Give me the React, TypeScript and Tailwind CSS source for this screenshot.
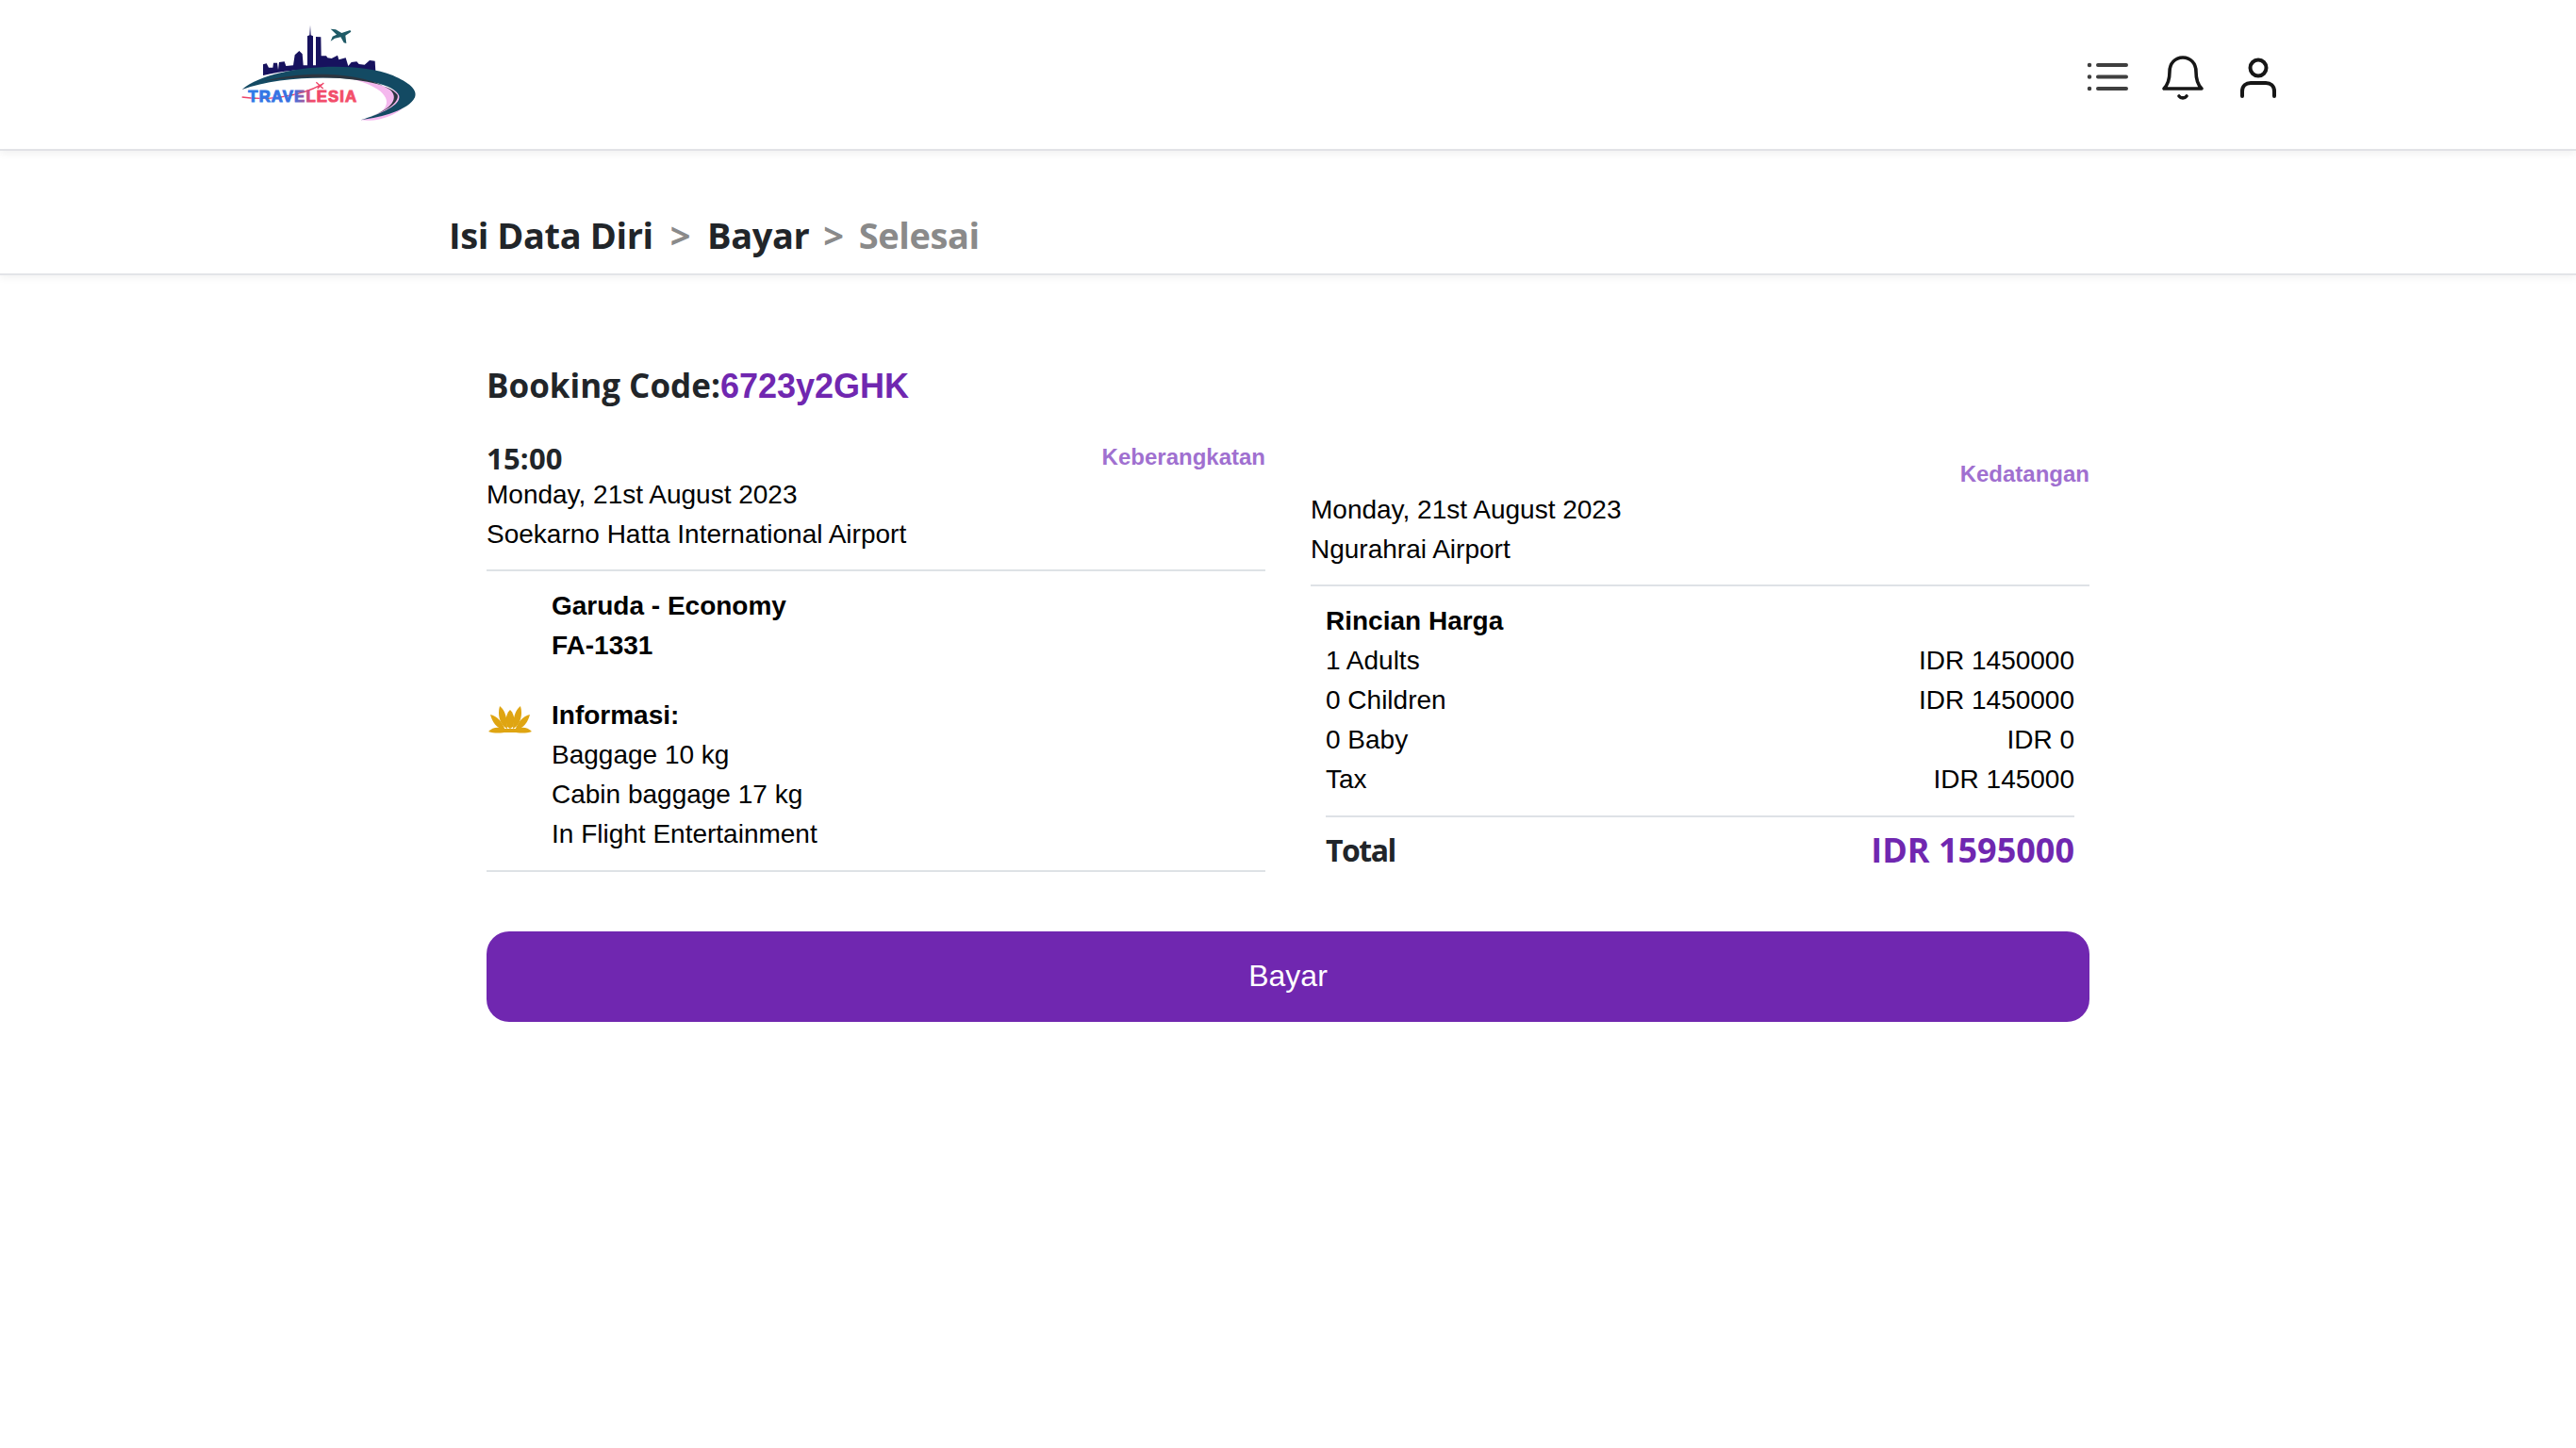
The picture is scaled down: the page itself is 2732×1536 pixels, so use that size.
const heading = "font-['Open_Sans',sans-serif] font-bold text-[#212529]";

function Logo() {
  return (
    <svg width="240" height="150" viewBox="0 0 720 450" className="mb-2 shrink-0">
      <defs>
        <linearGradient id="logoText" x1="0" x2="1" y1="0" y2="0">
          <stop offset="0" stopColor="#2f7be8" />
          <stop offset="0.42" stopColor="#3a6fe0" />
          <stop offset="0.58" stopColor="#f0486a" />
          <stop offset="1" stopColor="#f4506a" />
        </linearGradient>
      </defs>
      {/* pink glow under the swoosh */}
      <path d="M80 285 C170 225 420 215 520 290 C565 330 530 365 458 382 C520 390 590 360 610 320 C540 240 240 210 80 285Z" fill="#f5b8ee" />
      {/* skyline */}
      <path
        d="M147 240 L147 205 L158 202 L165 215 L178 215 L180 200 L192 200 L195 222 L198 198 L215 196 L220 210 L243 208 L248 175 L262 162 L272 172 L275 208 L288 208 L288 115 L295 112 L297 80 L299 112 L306 115 L306 208 L315 208 L315 117 L331 118 L332 178 L348 178 L352 184 L365 186 L384 176 L388 190 L410 184 L418 210 L428 198 L445 196 L452 204 L470 206 L486 192 L503 194 L505 228 C400 215 240 215 147 240Z"
        fill="#17125e"
      />
      {/* swoosh */}
      <path d="M80 285 C170 210 430 190 560 240 C610 262 640 285 630 310 C610 350 530 372 458 382 C525 360 585 335 580 305 C560 240 240 225 80 285Z" fill="#134a63" />
      <path d="M150 258 C270 225 460 225 550 285 C580 310 560 345 490 370 C545 350 580 325 575 302 C535 245 300 235 150 258Z" fill="#2c3540" />
      {/* plane */}
      <path d="M362 92 L378 94 L397 105 L424 96 L427 101 L409 113 L412 138 L404 136 L394 118 L375 122 L362 131 L368 116 L381 110Z" fill="#1f5a66" />
      <path d="M80 309 C150 320 260 310 335 268 M316 262 L338 282 M320 282 L340 264" stroke="#ee4468" strokeWidth="4" fill="none" />
      <text x="100" y="323" fontFamily="'Liberation Sans',sans-serif" fontWeight="700" fontSize="50" letterSpacing="3.5" fill="url(#logoText)" stroke="url(#logoText)" strokeWidth="3">
        TRAVELESIA
      </text>
    </svg>
  );
}

function ListIcon() {
  return (
    <svg width="60" height="60" viewBox="0 0 60 60" fill="none" stroke="#3f3f3f" strokeLinecap="round">
      <path d="M20 17H50M20 29.5H50M20 42H50" strokeWidth="4" />
      <path d="M11 17h.01M11 29.5h.01M11 42h.01" strokeWidth="4.5" />
    </svg>
  );
}

function BellIcon() {
  return (
    <svg width="60" height="60" viewBox="0 0 60 60" fill="none" stroke="#161616" strokeWidth="3.6" strokeLinecap="round" strokeLinejoin="round">
      <path d="M10 42 H50 C45 37 44 31 44 24 C44 15 38 9 30 9 C22 9 16 15 16 24 C16 31 15 37 10 42Z" />
      <path d="M26 50 C28 52.5 32 52.5 34 50" />
    </svg>
  );
}

function UserIcon() {
  return (
    <svg width="60" height="60" viewBox="0 0 60 60" fill="none" stroke="#161616" strokeWidth="4" strokeLinecap="round">
      <circle cx="30" cy="20" r="8.5" />
      <path d="M13 50 V45 C13 39 17 36 22 36 H38 C43 36 47 39 47 45 V50" />
    </svg>
  );
}

function LotusIcon() {
  return (
    <svg width="46" height="29" viewBox="0 0 46 29" fill="#dfa512">
      <path d="M23 4 C28 9 28 15 26 22 L23 24 L20 22 C18 15 18 9 23 4Z" />
      <path d="M12 0 C17 4 20 11 20 24 C13 21 9 10 12 0Z" />
      <path d="M34 0 C29 4 26 11 26 24 C33 21 37 10 34 0Z" />
      <path d="M2 9 C8 10 14 15 18 26 C9 24 4 17 2 9Z" />
      <path d="M44 9 C38 10 32 15 28 26 C37 24 42 17 44 9Z" />
      <path d="M0 27 C5 22 13 21 20 27 C14 29 6 29 0 27Z" />
      <path d="M46 27 C41 22 33 21 26 27 C32 29 40 29 46 27Z" />
      <path d="M17 24 H29 L30 28 H16Z" />
    </svg>
  );
}

const priceRows = [
  ['1 Adults', 'IDR 1450000'],
  ['0 Children', 'IDR 1450000'],
  ['0 Baby', 'IDR 0'],
  ['Tax', 'IDR 145000'],
];

export default function App() {
  return (
    <div className="min-h-[1536px] bg-white font-['Liberation_Sans',sans-serif] text-[28px] leading-[42px] text-black">
      {/* Top bar */}
      <header className="flex h-[160px] items-center justify-between border-b-2 border-[#e3e4e8] pl-[230px] pr-[307px] shadow-[0_3px_8px_rgba(0,0,0,0.06)]">
        <Logo />
        <div className="flex items-center gap-5 pt-[6px]">
          <ListIcon />
          <BellIcon />
          <UserIcon />
        </div>
      </header>

      {/* Steps */}
      <nav className={`flex h-[132px] items-end gap-[18px] border-b-2 border-[#e3e4e8] pb-[14px] pl-[476px] text-[38px] leading-[54px] tracking-[-0.4px] shadow-[0_3px_8px_rgba(0,0,0,0.05)] ${heading}`}>
        <span>Isi Data Diri</span>
        <span className="text-[#8a8a8a]">&gt;</span>
        <span>Bayar</span>
        <span className="-ml-[3px] text-[#8a8a8a]">&gt;</span>
        <span className="-ml-[2px] text-[#8a8a8a]">Selesai</span>
      </nav>

      <main className="mx-[516px] pt-[94px]">
        <h1 className={`text-[35px] leading-[46px] ${heading}`}>
          Booking Code:
          <span className="font-['Liberation_Sans',sans-serif] text-[36px] text-[#7027b0]">6723y2GHK</span>
        </h1>

        <div className="mt-[34px] grid grid-cols-2 gap-x-12">
          {/* Flight */}
          <section>
            <div className="flex items-start justify-between">
              <div className={`text-[31px] leading-[38px] tracking-[0.2px] ${heading}`}>15:00</div>
              <div className="text-[24px] font-bold leading-[36px] text-[#a070d0]">Keberangkatan</div>
            </div>
            <div className="-mt-px">Monday, 21st August 2023</div>
            <div>Soekarno Hatta International Airport</div>
            <div className="mt-[16px] h-[2px] bg-[#dee2e6]" />
            <div className="mt-[16px] flex">
              <div className="w-[69px] shrink-0 pl-[2px] pt-[127px]">
                <LotusIcon />
              </div>
              <div>
                <div className="font-bold">Garuda - Economy</div>
                <div className="font-bold">FA-1331</div>
                <div className="mt-[32px] font-bold">Informasi:</div>
                <div>Baggage 10 kg</div>
                <div>Cabin baggage 17 kg</div>
                <div>In Flight Entertainment</div>
              </div>
            </div>
            <div className="mt-[17px] h-[2px] bg-[#dee2e6]" />
          </section>

          {/* Arrival and price */}
          <section className="pt-[18px]">
            <div className="text-right text-[24px] font-bold leading-[36px] text-[#a070d0]">Kedatangan</div>
            <div className="-mt-[1px]">Monday, 21st August 2023</div>
            <div>Ngurahrai Airport</div>
            <div className="mt-[16px] h-[2px] bg-[#dee2e6]" />
            <div className="mt-[16px] px-4">
              <div className="font-bold">Rincian Harga</div>
              {priceRows.map(([label, value]) => (
                <div key={label} className="flex justify-between">
                  <span>{label}</span>
                  <span>{value}</span>
                </div>
              ))}
              <div className="mt-[17px] h-[2px] bg-[#dee2e6]" />
              <div className={`mt-[12px] flex items-center justify-between leading-[46px] ${heading}`}>
                <span className="text-[32px] tracking-[-1.5px]">Total</span>
                <span className="text-[36px] text-[#7027b0]">IDR 1595000</span>
              </div>
            </div>
          </section>
        </div>

        <button className="mt-[63px] h-[96px] w-full rounded-[24px] bg-[#7027b0] pb-[3px] text-[32px] text-white">Bayar</button>
      </main>
    </div>
  );
}
